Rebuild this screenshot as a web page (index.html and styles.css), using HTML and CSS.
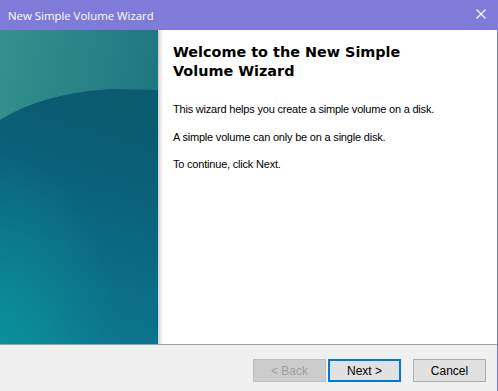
FILE: index.html
```html
<!DOCTYPE html>
<html lang="en">
  <head>
    <meta charset="UTF-8" />
    <title>New Simple Volume Wizard</title>
    <link rel="stylesheet" href="styles.css">
  </head>
  <body>
    <div class="window">
      <div class="titlebar">
        <span class="title">New Simple Volume Wizard</span>
        <svg class="close" width="10" height="10" viewBox="0 0 10 10">
          <path d="M0.5 0.5 L9.5 9.5 M9.5 0.5 L0.5 9.5" stroke="#fff" stroke-width="1.1" />
        </svg>
      </div>

      <div class="main">
        <div class="banner">
          <svg width="158" height="314" viewBox="0 0 158 314" preserveAspectRatio="none">
            <defs>
              <linearGradient id="top" x1="0" y1="0" x2="1" y2="0.4">
                <stop offset="0" stop-color="#34918e" />
                <stop offset="1" stop-color="#1d7480" />
              </linearGradient>
              <linearGradient id="low" x1="0.3" y1="0" x2="0.1" y2="1">
                <stop offset="0" stop-color="#0a5a70" />
                <stop offset="0.55" stop-color="#0b6983" />
                <stop offset="1" stop-color="#0d7b93" />
              </linearGradient>
              <radialGradient id="glow" cx="0" cy="1" r="0.75">
                <stop offset="0" stop-color="#0a9699" stop-opacity="0.75" />
                <stop offset="1" stop-color="#0a9699" stop-opacity="0" />
              </radialGradient>
            </defs>
            <rect width="158" height="314" fill="url(#top)" />
            <path d="M0 90 Q40 64 110 59 L158 60 L158 314 L0 314 Z" fill="url(#low)" />
            <path d="M0 90 Q40 64 110 59 L158 60 L158 314 L0 314 Z" fill="url(#glow)" />
          </svg>
        </div>
        <div class="shade"></div>

        <div class="content">
          <h1>Welcome to the New Simple Volume Wizard</h1>
          <p class="first">This wizard helps you create a simple volume on a disk.</p>
          <p>A simple volume can only be on a single disk.</p>
          <p>To continue, click Next.</p>
        </div>
      </div>

      <div class="footer">
        <button class="back" disabled>&lt; Back</button>
        <button class="next">Next &gt;</button>
        <button class="cancel">Cancel</button>
      </div>
    </div>
  </body>
</html>
```

FILE: styles.css
```css
body {
  margin: 0;
  font-family: "Liberation Sans", Arial, sans-serif;
  background-color: #fff;
}

.window {
  width: 498px;
  height: 391px;
  display: flex;
  flex-direction: column;
  box-sizing: border-box;
  border-right: 1px solid #7f7bd8;
}

.titlebar {
  height: 30px;
  flex: none;
  background-color: #7f7bd8;
  display: flex;
  align-items: center;
  justify-content: space-between;
  padding: 0 11px 0 8px;
}

.title {
  font-family: "Open Sans", sans-serif;
  font-size: 11.4px;
  color: #fff;
}

.close {
  display: block;
  margin-top: -2px;
}

.main {
  height: 314px;
  flex: none;
  display: flex;
  background-color: #fff;
}

.banner {
  width: 158px;
  flex: none;
}

.banner svg {
  display: block;
}

.shade {
  width: 5px;
  flex: none;
  background: linear-gradient(to right, #cfcfcf, #e6e6e6 40%, #f6f6f6 80%, #fff);
}

.content {
  flex: 1;
  padding: 13px 20px 0 10px;
}

h1 {
  margin: 0;
  width: 250px;
  font-family: "DejaVu Sans", Verdana, sans-serif;
  font-size: 14.4px;
  font-weight: bold;
  line-height: 19px;
  color: #000;
}

.content p {
  margin: 0;
  font-size: 11px;
  letter-spacing: -0.2px;
  line-height: 13px;
  color: #000;
  margin-top: 15px;
}

.content p.first {
  margin-top: 22px;
}

.content p + p + p {
  margin-top: 14px;
}

.footer {
  flex: 1;
  background-color: #f0f0f0;
  border-top: 1px solid #a0a0a0;
  display: flex;
  justify-content: flex-end;
  align-items: flex-start;
  padding: 14px 11px 0 0;
}

.footer button {
  width: 73px;
  height: 23px;
  box-sizing: border-box;
  font-family: "Liberation Sans", Arial, sans-serif;
  font-size: 12px;
  color: #000;
  background-color: #e1e1e1;
  border: 1px solid #adadad;
  padding: 0;
}

.footer .back {
  background-color: #cccccc;
  border-color: #bfbfbf;
  color: #a0a0a0;
}

.footer .next {
  margin-left: 2px;
  border: 2px solid #0078d7;
}

.footer .cancel {
  margin-left: 12px;
}
```
